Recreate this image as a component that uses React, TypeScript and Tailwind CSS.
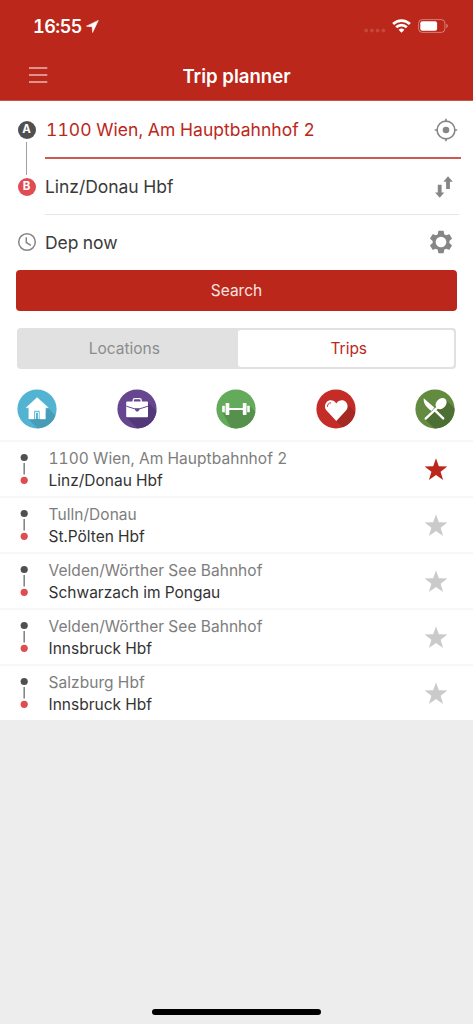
import type { ReactNode } from "react";

interface Trip {
  from: string;
  to: string;
  starred: boolean;
}

const trips: Trip[] = [
  { from: "1100 Wien, Am Hauptbahnhof 2", to: "Linz/Donau Hbf", starred: true },
  { from: "Tulln/Donau", to: "St.Pölten Hbf", starred: false },
  { from: "Velden/Wörther See Bahnhof", to: "Schwarzach im Pongau", starred: false },
  { from: "Velden/Wörther See Bahnhof", to: "Innsbruck Hbf", starred: false },
  { from: "Salzburg Hbf", to: "Innsbruck Hbf", starred: false },
];

function StatusBar() {
  return (
    <div className="flex h-[52px] items-center justify-between pl-[33px] pr-[24px] text-white">
      <div className="flex items-center">
        <span className="pt-[1px] text-[18px] font-semibold leading-[22px] tracking-[-0.5px] tabular-nums">16:55</span>
        <svg width="13" height="13" viewBox="0 0 13 13" className="ml-1">
          <path d="M12.3.4 6.6 12.5 6.2 6.7.4 6.2Z" fill="currentColor" stroke="currentColor" strokeWidth=".6" strokeLinejoin="round" />
        </svg>
      </div>
      <div className="flex items-center">
        <svg width="22" height="14" viewBox="0 0 22 14" className="mr-1.5" fill="#ffffff" fillOpacity=".15">
          <circle cx="2.2" cy="11.5" r="1.9" />
          <circle cx="7.9" cy="11.5" r="1.9" />
          <circle cx="13.6" cy="11.5" r="1.9" />
          <circle cx="19.4" cy="11.5" r="1.9" />
        </svg>
        <svg width="19" height="14" viewBox="0 0 19 14" className="mr-[7px]" fill="none" stroke="currentColor" strokeWidth="2.7">
          <path d="M1.1 5A12 12 0 0 1 17.9 5" />
          <path d="M4.2 8.2A7.6 7.6 0 0 1 14.8 8.2" />
          <path d="M6.6 10.8A4.2 4.2 0 0 1 12.4 10.8L9.5 13.7Z" fill="currentColor" stroke="none" />
        </svg>
        <svg width="31" height="14" viewBox="0 0 31 14">
          <rect x=".6" y=".6" width="26.3" height="12.8" rx="3.6" fill="none" stroke="#ffffff" strokeOpacity=".4" />
          <rect x="2.3" y="2.2" width="16.8" height="9.6" rx="2" fill="#ffffff" />
          <path d="M28.3 4.8a2.4 2.4 0 0 1 0 4.4Z" fill="#ffffff" fillOpacity=".45" />
        </svg>
      </div>
    </div>
  );
}

function Marker({ letter, color }: { letter: string; color: string }) {
  return (
    <span className={`flex size-[18px] items-center justify-center rounded-full text-[11.5px] font-bold leading-none text-white ${color}`}>
      {letter}
    </span>
  );
}

function TargetIcon() {
  return (
    <svg width="24" height="24" viewBox="0 0 24 24" fill="none" stroke="#868686" strokeWidth="1.6">
      <circle cx="12" cy="12" r="8.9" />
      <path d="M12 .8v3M12 20.2v3M.8 12h3M20.2 12h3" />
      <circle cx="12" cy="12" r="3.3" fill="#868686" stroke="none" />
    </svg>
  );
}

function SwapIcon() {
  return (
    <svg width="18" height="22" viewBox="0 0 18 22" fill="#868686">
      <path d="M2.8 8.8h3.8v7.7h2.7L4.7 21.8.1 16.5h2.7Z" />
      <path d="M11.1 13h3.8V5.8h2.9L13 .2 8.4 5.8h2.7Z" />
    </svg>
  );
}

function GearIcon() {
  return (
    <svg width="28" height="28" viewBox="0 0 24 24" fill="#868686">
      <path d="M19.14 12.94c.04-.3.06-.61.06-.94 0-.32-.02-.64-.07-.94l2.03-1.58a.49.49 0 0 0 .12-.61l-1.92-3.32a.488.488 0 0 0-.59-.22l-2.39.96c-.5-.38-1.03-.7-1.62-.94l-.36-2.54a.484.484 0 0 0-.48-.41h-3.84c-.24 0-.43.17-.47.41l-.36 2.54c-.59.24-1.13.57-1.62.94l-2.39-.96c-.22-.08-.47 0-.59.22L2.74 8.87c-.12.21-.08.47.12.61l2.03 1.58c-.05.3-.09.63-.09.94s.02.64.07.94l-2.03 1.58a.49.49 0 0 0-.12.61l1.92 3.32c.12.22.37.29.59.22l2.39-.96c.5.38 1.03.7 1.62.94l.36 2.54c.05.24.24.41.48.41h3.84c.24 0 .44-.17.47-.41l.36-2.54c.59-.24 1.13-.56 1.62-.94l2.39.96c.22.08.47 0 .59-.22l1.92-3.32c.12-.22.07-.47-.12-.61l-2.01-1.58zM12 16.6a4.6 4.6 0 1 1 0-9.2 4.6 4.6 0 0 1 0 9.2z" />
    </svg>
  );
}

function Badge({ id, color, shadow, shade, children }: { id: string; color: string; shadow: string; shade: string; children: ReactNode }) {
  return (
    <svg width="40" height="40" viewBox="0 0 40 40">
      <clipPath id={id}>
        <circle cx="20" cy="20" r="19.6" />
      </clipPath>
      <circle cx="20" cy="20" r="19.6" fill={color} />
      <path d={shadow} fill={shade} clipPath={`url(#${id})`} />
      {children}
    </svg>
  );
}

function Categories() {
  return (
    <div className="flex h-[71px] items-center justify-between pl-[17px] pr-[18px] pt-[8px]">
      <Badge id="home" color="#52b4d2" shade="#479cb8" shadow="M30.5 18.5 46 34 46 48 29 48 11.5 30.2 27 29Z">
        <path d="M20.1 8.5 31.4 18.8H28.4V30H22.8V21.8H17V30H11.8V18.8H9Z" fill="#fff" stroke="#fff" strokeWidth=".4" strokeLinejoin="round" />
        <path d="M18.5 30v-6.6h2.9V30" fill="none" stroke="#fff" strokeWidth=".9" />
      </Badge>
      <Badge id="work" color="#65468f" shade="#54397a" shadow="M30.5 13 48 30.5 48 48 29 48 9.5 28.5Z">
        <path d="M16.2 13V11.2q0-1.6 1.6-1.6h4.8q1.6 0 1.6 1.6V13" fill="none" stroke="#fff" strokeWidth="1.3" />
        <rect x="9.2" y="12.6" width="21.8" height="15.6" rx=".9" fill="#fff" />
        <path d="M9.4 17.2 19 20.3h2.2L31 17.2" fill="none" stroke="#65468f" strokeWidth="1" />
        <path d="M18 19.3h4.4v1.8L21 22.5h-1.6L18 21.1Z" fill="#65468f" />
      </Badge>
      <Badge id="sport" color="#64aa5b" shade="#55914d" shadow="M33.7 17 48 31 48 48 20 48 6.5 23.5 12 25 14 20H30Z">
        <path d="M12 20h16" stroke="#fff" strokeWidth="2" />
        <rect x="9.6" y="14" width="3.7" height="12" rx=".7" fill="#fff" />
        <rect x="6.2" y="16.7" width="2.6" height="6.6" rx=".5" fill="#fff" />
        <rect x="26.8" y="14" width="3.7" height="12" rx=".7" fill="#fff" />
        <rect x="31.2" y="16.7" width="2.6" height="6.6" rx=".5" fill="#fff" />
      </Badge>
      <Badge id="favorite" color="#c42d27" shade="#a52823" shadow="M29.5 13 48 31.5 48 48 36 48 20.2 31.8Z">
        <path d="M20.3 32 10.8 21.8C8.4 19.2 8.5 15.5 10.5 13.2 13.1 10.3 18 10.7 20.3 14.6 22.6 10.7 27.5 10.3 30.1 13.2 32.1 15.5 32.2 19.2 29.8 21.8Z" fill="#fff" />
        <path d="M11.5 17.3c0-2 1.2-3.4 3.2-3.5" fill="none" stroke="#c42d27" strokeWidth="1" strokeLinecap="round" />
      </Badge>
      <Badge id="food" color="#628b40" shade="#4d6f34" shadow="M31 11 48 28 48 48 28 48 10.5 30.8 19 21Z">
        <path d="M28.2 29.4 19.5 20.8" stroke="#fff" strokeWidth="2.4" strokeLinecap="round" />
        <path d="M8.7 9.3 19.3 18.6 16.5 22C11.5 18.6 8.2 14.5 8.7 9.3Z" fill="#fff" />
        <path d="M10.7 29.6 23 18" stroke="#fff" strokeWidth="2.4" strokeLinecap="round" />
        <ellipse cx="26.1" cy="14.6" rx="6.3" ry="4.8" transform="rotate(-45 26.1 14.6)" fill="#fff" />
      </Badge>
    </div>
  );
}

function TripRow({ trip }: { trip: Trip }) {
  return (
    <div className="flex h-14 items-center border-t-2 border-[#f7f7f7] pl-[20px] pr-[25px]">
      <svg width="8" height="32" viewBox="0 0 8 32">
        <circle cx="4.2" cy="4.5" r="3.6" fill="#505050" />
        <path d="M4.2 10v11.6" stroke="#858585" strokeWidth="1.6" />
        <circle cx="4.2" cy="27.3" r="3.6" fill="#df4d52" />
      </svg>
      <div className="ml-[20.5px] flex-1 pt-[1px] text-[15.5px] leading-[22px] tabular-nums">
        <div className="tracking-[0.05px] text-[#7d7d7d]">{trip.from}</div>
        <div className="text-[#333333]">{trip.to}</div>
      </div>
      <svg width="24" height="23" viewBox="0 0 24 23" className={trip.starred ? "text-[#bb271a]" : "text-[#cacaca]"}>
        <path d="M12 .2 14.8 8.3 23.4 8.5 16.6 13.7 19.1 22 12 17.1 4.9 22 7.4 13.7.6 8.5 9.2 8.3Z" fill="currentColor" />
      </svg>
    </div>
  );
}

export default function App() {
  return (
    <div className="flex h-[1024px] w-[473px] flex-col overflow-hidden bg-[#ededed] font-[Inter,sans-serif]">
      <header className="h-[101px] border-b border-[#c8544a] bg-[#bb271a]">
        <StatusBar />
        <div className="grid h-[48px] grid-cols-3 items-center text-white">
          <svg width="19" height="17" viewBox="0 0 19 17" className="ml-[29px] mt-[-3px]">
            <path d="M0 2h18.3M0 9h18.3M0 16h18.3" stroke="currentColor" strokeWidth="1.2" />
          </svg>
          <h1 className="pb-[1px] text-center text-[18.6px] font-semibold leading-6">Trip planner</h1>
        </div>
      </header>

      <main className="bg-white">
        {/* Search form */}
        <section className="flex text-[17.5px] tabular-nums text-[#3a3a3a]">
          <div className="flex w-[45px] flex-col items-center pl-[8px] pt-[20px]">
            <Marker letter="A" color="bg-[#505050]" />
            <div className="my-[3px] h-[33px] w-px bg-[#a0a0a0]" />
            <Marker letter="B" color="bg-[#df4d52]" />
            <svg width="20" height="20" viewBox="0 0 20 20" className="mt-[36px]" fill="none" stroke="#868686" strokeWidth="1.5">
              <circle cx="10" cy="10" r="8.3" />
              <path d="M9.3 5.2v5.3l4.6 2.8" />
            </svg>
          </div>
          <div className="flex-1">
            <div className="mr-3 flex h-[58px] items-center justify-between border-b-2 border-[#cd5a4e] pl-[1px] pr-[3px] pt-[2px] text-[#bb271a]">
              <span className="tracking-[0.03px]">1100 Wien, Am Hauptbahnhof 2</span>
              <TargetIcon />
            </div>
            <div className="mr-3.5 flex h-[56px] items-center justify-between border-b border-[#e7e7e7] pr-[6px]">
              <span className="pt-[2px] tracking-[-0.04px]">Linz/Donau Hbf</span>
              <SwapIcon />
            </div>
            <div className="flex h-[55px] items-center justify-between pb-[1px] pr-[18px]">
              <span className="pt-[2px] tracking-[-0.1px]">Dep now</span>
              <GearIcon />
            </div>
          </div>
        </section>

        <button className="ml-4 block h-[41px] w-[441px] rounded-[4px] bg-[#bb271a] text-[15.5px] text-[#f8e5e3]">Search</button>

        {/* Locations / Trips switch */}
        <div className="ml-[17px] mt-[17px] flex h-[41px] w-[439px] rounded-[4px] bg-[#e1e1e1] p-[2px] text-[15.5px]">
          <button className="w-[218.5px] pr-[8px] pt-[1px] text-[#8c8c8c]">Locations</button>
          <button className="flex-1 rounded-[3px] bg-white pl-[6px] pt-[1px] text-[#bb271a]">Trips</button>
        </div>

        <Categories />

        <div>
          {trips.map((trip, i) => (
            <TripRow key={i} trip={trip} />
          ))}
        </div>
      </main>

      {/* Home indicator */}
      <div className="mx-auto mb-[9px] mt-auto h-[6px] w-[169px] rounded-full bg-black" />
    </div>
  );
}
